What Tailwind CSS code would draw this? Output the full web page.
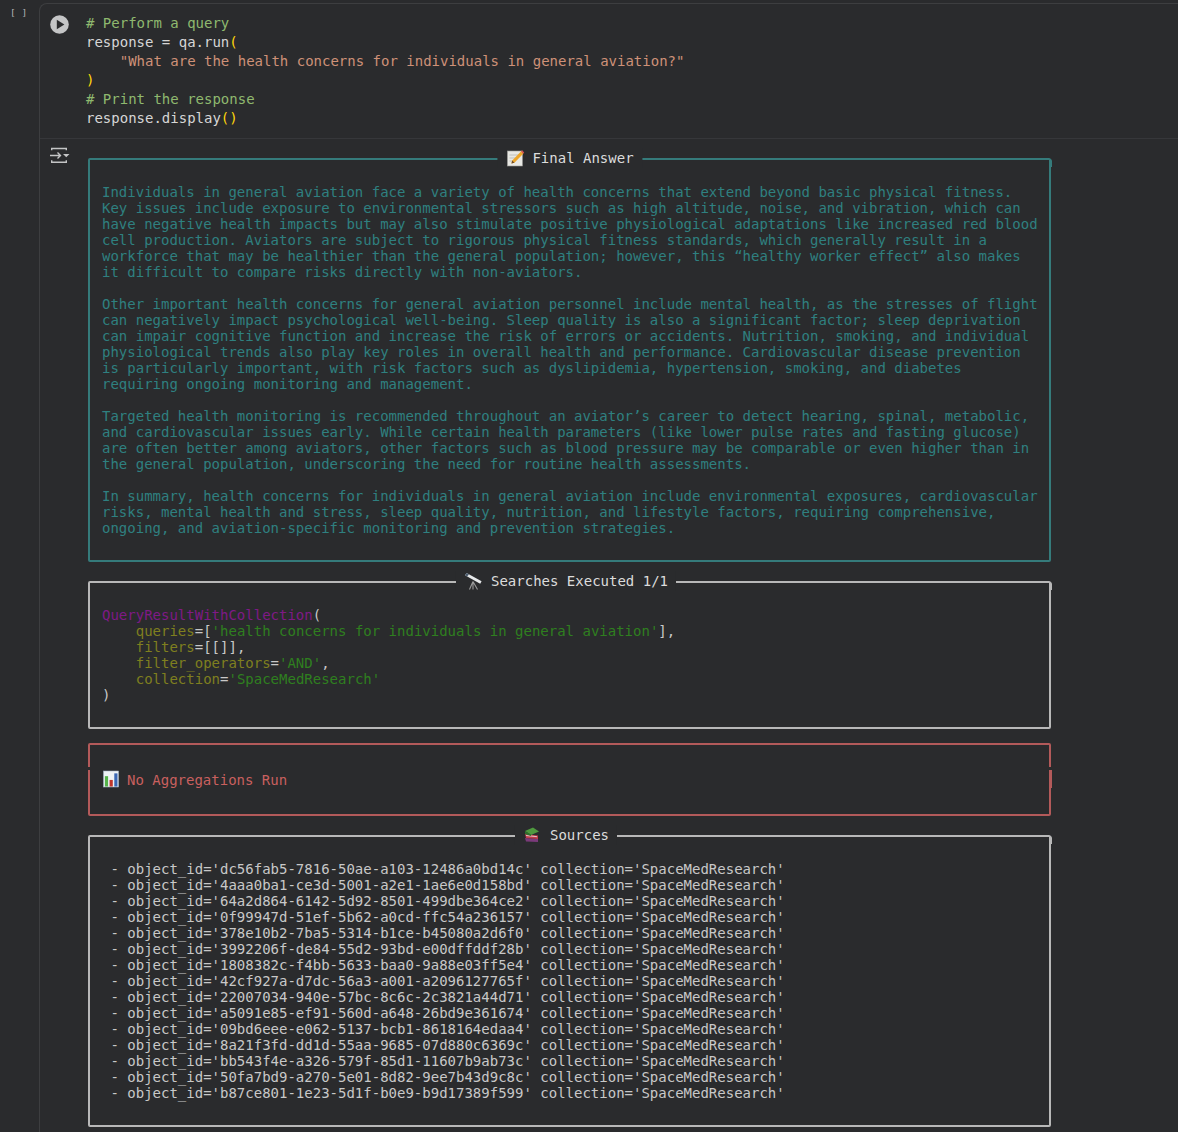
<!DOCTYPE html>
<html>
<head>
<meta charset="utf-8">
<script src="https://cdn.jsdelivr.net/npm/@tailwindcss/browser@4"></script>
</head>
<body class="bg-[#2a2b2d] overflow-hidden">
<div class="w-[1178px] h-[1132px] overflow-hidden flex pt-[3px] font-['DejaVu_Sans_Mono',monospace] text-[14px]">
  <div class="w-[39px] shrink-0 pt-[4px] pl-[10px] text-[9.5px] leading-[12px] text-[#b4b5b7] whitespace-pre">[ ]</div>
  <div class="flex-1 border-l border-t border-[#3d3e40] rounded-tl-[8px] min-w-0">
    <div class="flex border-b border-[#36373a] pt-[10px] pb-[10px] h-[135px]">
      <div class="w-[46px] shrink-0 pl-[10px] pt-[1px]">
        <svg width="19" height="19" viewBox="0 0 19 19"><circle cx="9.5" cy="9.5" r="9.3" fill="#c4c5c6"/><path d="M6.8 4.8v9.4l7.6-4.7z" fill="#2a2b2d"/></svg>
      </div>
      <pre class="font-['DejaVu_Sans_Mono',monospace] text-[14px] leading-[19px] text-[#d6d6d6]"><span class="text-[#8fb96f]"># Perform a query</span>
response = qa.run<span class="text-[#ffd60a]">(</span>
    <span class="text-[#ce9178]">"What are the health concerns for individuals in general aviation?"</span>
<span class="text-[#ffd60a]">)</span>
<span class="text-[#8fb96f]"># Print the response</span>
response.display<span class="text-[#ffd60a]">()</span></pre>
    </div>
    <div class="flex">
      <div class="w-[48px] shrink-0 pl-[10px] pt-[8px]">
        <svg width="20" height="17" viewBox="0 0 20 17" fill="none" stroke="#c4c5c6" stroke-width="1.4"><path d="M1.7 3.2V1.5h14.6v1.7M1.7 13.3v2h14.6v-2"/><path d="M0 8.5h10.5M7.5 5.5l3 3-3 3"/><path d="M13 7h6.5l-3.25 3.2z" fill="#c4c5c6" stroke="none"/></svg>
      </div>
      <div class="w-[963px] pt-[19px]">

        <section class="relative border-2 border-[#357b7b] rounded-[2px] px-[12px] pt-[24px] pb-[24px]">
          <div class="absolute -top-[12px] left-[480px] -translate-x-1/2 flex items-center h-[20px] px-[9px] bg-[#2a2b2d] text-[#dcdcdc] whitespace-nowrap">
            <svg class="mr-[8px]" width="18" height="18" viewBox="0 0 18 18"><rect x="1" y="2" width="15" height="15" fill="#e8e8e4" stroke="#9c9c98" stroke-width=".6"/><path d="M3 6h11M3 9h8M3 12h6" stroke="#b5b5b0" stroke-width=".8"/><path d="M5 14.5l.8-3L14.5 2.5l2.3 2.2-8.8 9z" fill="#eda62a"/><path d="M5 14.5l.8-3 2.2 2.2z" fill="#6b4a28"/><path d="M14.5 2.5l2.3 2.2 1-1.1-2.2-2.3z" fill="#d9534f"/></svg>
            <span>Final Answer</span>
          </div>
          <div class="absolute -right-[3px] -top-[1px] w-[2px] h-[8px] bg-[#357b7b] rounded-tr-[2px]"></div>
<pre class="font-['DejaVu_Sans_Mono',monospace] text-[14px] leading-[16px] text-[#2f8080]">Individuals in general aviation face a variety of health concerns that extend beyond basic physical fitness.
Key issues include exposure to environmental stressors such as high altitude, noise, and vibration, which can
have negative health impacts but may also stimulate positive physiological adaptations like increased red blood
cell production. Aviators are subject to rigorous physical fitness standards, which generally result in a
workforce that may be healthier than the general population; however, this “healthy worker effect” also makes
it difficult to compare risks directly with non-aviators.

Other important health concerns for general aviation personnel include mental health, as the stresses of flight
can negatively impact psychological well-being. Sleep quality is also a significant factor; sleep deprivation
can impair cognitive function and increase the risk of errors or accidents. Nutrition, smoking, and individual
physiological trends also play key roles in overall health and performance. Cardiovascular disease prevention
is particularly important, with risk factors such as dyslipidemia, hypertension, smoking, and diabetes
requiring ongoing monitoring and management.

Targeted health monitoring is recommended throughout an aviator’s career to detect hearing, spinal, metabolic,
and cardiovascular issues early. While certain health parameters (like lower pulse rates and fasting glucose)
are often better among aviators, other factors such as blood pressure may be comparable or even higher than in
the general population, underscoring the need for routine health assessments.

In summary, health concerns for individuals in general aviation include environmental exposures, cardiovascular
risks, mental health and stress, sleep quality, nutrition, and lifestyle factors, requiring comprehensive,
ongoing, and aviation-specific monitoring and prevention strategies.</pre>
        </section>

        <section class="relative mt-[19px] border-2 border-[#b8b8b8] rounded-[2px] px-[12px] pt-[24px] pb-[24px]">
          <div class="absolute -top-[12px] left-[476px] -translate-x-1/2 flex items-center h-[20px] px-[8px] bg-[#2a2b2d] text-[#dcdcdc] whitespace-nowrap">
            <svg class="mr-[9px]" width="18" height="18" viewBox="0 0 18 18"><path d="M1 3.2L2.6 1l15 8.2-1.4 2.6z" fill="#e6e8ea"/><path d="M1 3.2L2.6 1l2.4 1.3-1.8 2.3z" fill="#4a5a6c"/><path d="M9 9.5l-3.5 8M9 9.5V17.5M9 9.5l4.5 8" stroke="#9a9a9a" stroke-width="1.1" fill="none"/></svg>
            <span>Searches Executed 1/1</span>
          </div>
          <div class="absolute -right-[3px] -top-[1px] w-[2px] h-[8px] bg-[#b8b8b8] rounded-tr-[2px]"></div>
<pre class="font-['DejaVu_Sans_Mono',monospace] text-[14px] leading-[16px] text-[#c8c8c8]"><span class="text-[#7f1a86]">QueryResultWithCollection</span>(
    <span class="text-[#7f7f1f]">queries</span>=[<span class="text-[#2f7f1f]">'health concerns for individuals in general aviation'</span>],
    <span class="text-[#7f7f1f]">filters</span>=[[]],
    <span class="text-[#7f7f1f]">filter_operators</span>=<span class="text-[#2f7f1f]">'AND'</span>,
    <span class="text-[#7f7f1f]">collection</span>=<span class="text-[#2f7f1f]">'SpaceMedResearch'</span>
)</pre>
        </section>

        <section class="relative mt-[14px] border-2 border-[#b35a5a] rounded-[2px] px-[12px] pt-[27px] pb-[26px] h-[73px]">
          <div class="flex items-center h-[16px] text-[#c9605f] whitespace-pre">
            <svg class="ml-[1px] mr-[8px] -mt-[2px]" width="16" height="18" viewBox="0 0 17 18"><rect x=".5" y=".5" width="16" height="17" fill="#eef2f6" stroke="#9fb0c4" stroke-width=".6"/><rect x="2" y="6" width="3.4" height="11" fill="#55b24a"/><rect x="7" y="10" width="3.4" height="7" fill="#c0362c"/><rect x="12" y="3" width="3.4" height="14" fill="#3b68b5"/></svg><span>No Aggregations Run</span>
          </div>
          <div class="absolute -left-[2px] top-[22px] w-[2px] h-[3px] bg-[#2a2b2d]"></div>
          <div class="absolute -right-[2px] top-[22px] w-[2px] h-[3px] bg-[#2a2b2d]"></div>
          <div class="absolute -right-[3px] top-[25px] w-[2px] h-[18px] bg-[#b35a5a]"></div>
        </section>

        <section class="relative mt-[19px] border-2 border-[#b8b8b8] rounded-[2px] px-[12px] pt-[24px] pb-[24px]">
          <div class="absolute -top-[12px] left-[476px] -translate-x-1/2 flex items-center h-[20px] px-[8px] bg-[#2a2b2d] text-[#dcdcdc] whitespace-nowrap">
            <svg class="mr-[9px]" width="18" height="18" viewBox="0 0 18 18"><path d="M2 12l13 1v3l-12-.5z" fill="#7a3a7a"/><path d="M2 8l13 1.5v3.5l-12-1z" fill="#c23b4a"/><path d="M3 9.5l11 1.2" stroke="#e8e8e8" stroke-width=".8"/><path d="M2 5l8-3.5 6 4-8 3.5z" fill="#4f9a3f"/><path d="M2 5v3l6 2V8.5z" fill="#2f6f2c"/></svg>
            <span>Sources</span>
          </div>
          <div class="absolute -right-[3px] -top-[1px] w-[2px] h-[8px] bg-[#b8b8b8] rounded-tr-[2px]"></div>
<pre class="font-['DejaVu_Sans_Mono',monospace] text-[14px] leading-[16px] text-[#c8c8c8]"> - object_id='dc56fab5-7816-50ae-a103-12486a0bd14c' collection='SpaceMedResearch'
 - object_id='4aaa0ba1-ce3d-5001-a2e1-1ae6e0d158bd' collection='SpaceMedResearch'
 - object_id='64a2d864-6142-5d92-8501-499dbe364ce2' collection='SpaceMedResearch'
 - object_id='0f99947d-51ef-5b62-a0cd-ffc54a236157' collection='SpaceMedResearch'
 - object_id='378e10b2-7ba5-5314-b1ce-b45080a2d6f0' collection='SpaceMedResearch'
 - object_id='3992206f-de84-55d2-93bd-e00dffddf28b' collection='SpaceMedResearch'
 - object_id='1808382c-f4bb-5633-baa0-9a88e03ff5e4' collection='SpaceMedResearch'
 - object_id='42cf927a-d7dc-56a3-a001-a2096127765f' collection='SpaceMedResearch'
 - object_id='22007034-940e-57bc-8c6c-2c3821a44d71' collection='SpaceMedResearch'
 - object_id='a5091e85-ef91-560d-a648-26bd9e361674' collection='SpaceMedResearch'
 - object_id='09bd6eee-e062-5137-bcb1-8618164edaa4' collection='SpaceMedResearch'
 - object_id='8a21f3fd-dd1d-55aa-9685-07d880c6369c' collection='SpaceMedResearch'
 - object_id='bb543f4e-a326-579f-85d1-11607b9ab73c' collection='SpaceMedResearch'
 - object_id='50fa7bd9-a270-5e01-8d82-9ee7b43d9c8c' collection='SpaceMedResearch'
 - object_id='b87ce801-1e23-5d1f-b0e9-b9d17389f599' collection='SpaceMedResearch'</pre>
        </section>
      </div>
    </div>
  </div>
</div>
</body>
</html>
